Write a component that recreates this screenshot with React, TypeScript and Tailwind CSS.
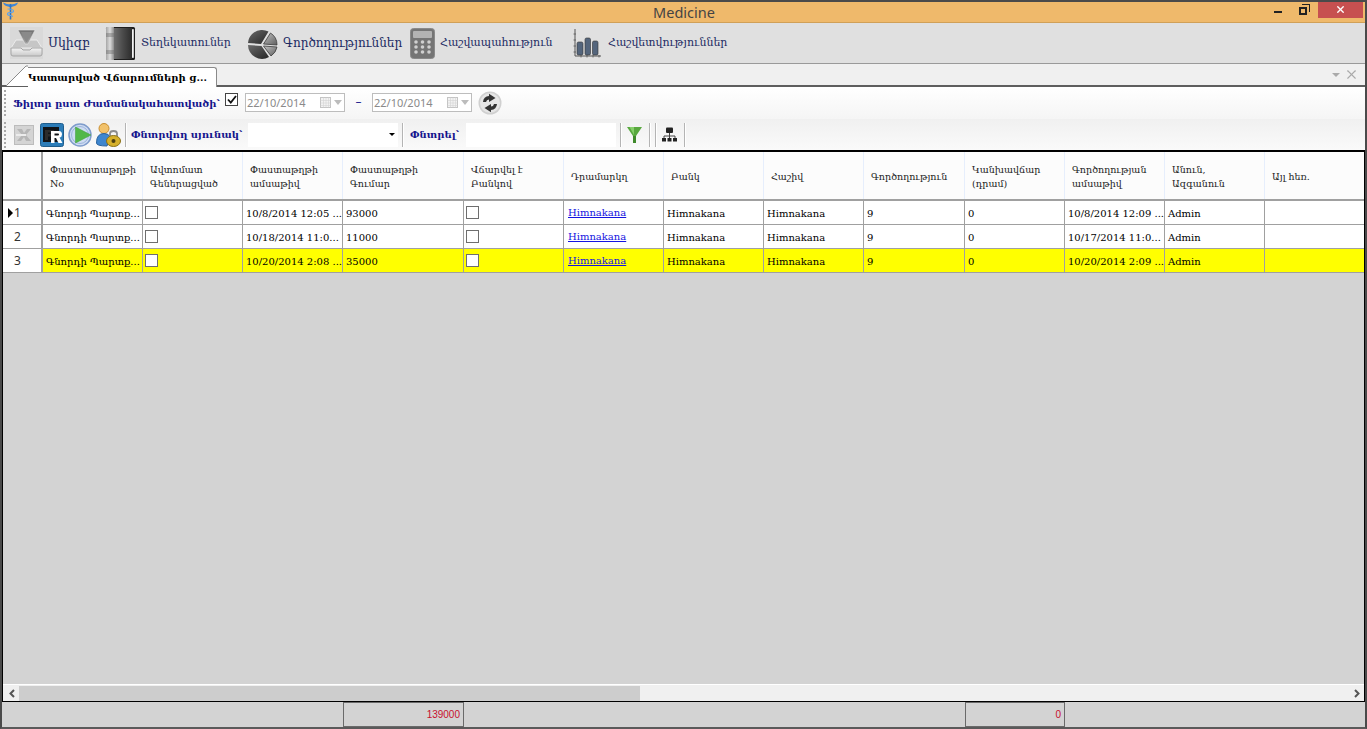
import { X } from 'lucide-react';

// Column widths for the payments grid, in order
const columns = [
  { title: ['Փաստատաթղթի', 'No'], width: 'w-[100px]' },
  { title: ['Ավտոմատ', 'Գեներացված'], width: 'w-[100px]' },
  { title: ['Փաստաթղթի', 'ամսաթիվ'], width: 'w-[100px]' },
  { title: ['Փաստաթղթի', 'Գումար'], width: 'w-[121px]' },
  { title: ['Վճարվել է', 'Բանկով'], width: 'w-[100px]' },
  { title: ['Դրամարկղ'], width: 'w-[100px]' },
  { title: ['Բանկ'], width: 'w-[100px]' },
  { title: ['Հաշիվ'], width: 'w-[100px]' },
  { title: ['Գործողություն'], width: 'w-[101px]' },
  { title: ['Կանխավճար', '(դրամ)'], width: 'w-[100px]' },
  { title: ['Գործողության', 'ամսաթիվ'], width: 'w-[100px]' },
  { title: ['Անուն,', 'Ազգանուն'], width: 'w-[100px]' },
  { title: ['Այլ հեռ.'], width: 'w-[100px]' },
];

const rows = [
  { id: 1, date: '10/8/2014 12:05 ...', sum: '93000', opDate: '10/8/2014 12:09 ...', highlight: false },
  { id: 2, date: '10/18/2014 11:0...', sum: '11000', opDate: '10/17/2014 11:0...', highlight: false },
  { id: 3, date: '10/20/2014 2:08 ...', sum: '35000', opDate: '10/20/2014 2:09 ...', highlight: true },
];

function Grip() {
  return (
    <div className="flex flex-col gap-[2px] ml-[2px] mr-[7px] w-[2px]">
      {[0, 1, 2, 3, 4, 5, 6].map((i) => (
        <span key={i} className="block w-[2px] h-[2px] bg-[#a9a9a9]" />
      ))}
    </div>
  );
}

function Sep({ className = '' }: { className?: string }) {
  return <div className={`w-px h-[24px] bg-[#b4b4b4] border-r border-white box-content ${className}`} />;
}

function Checkbox() {
  return <div className="w-[13px] h-[13px] ml-[-1px] mb-[3px] border border-[#6e6e6e] bg-white shrink-0" />;
}

function HomeIcon() {
  return (
    <svg width="33" height="32" viewBox="0 0 33 32" className="shrink-0">
      <defs>
        <linearGradient id="funnel" x1="0" y1="0" x2="0" y2="1">
          <stop offset="0" stopColor="#6f6f6f" />
          <stop offset="1" stopColor="#a8a8a8" />
        </linearGradient>
        <linearGradient id="tray" x1="0" y1="0" x2="0" y2="1">
          <stop offset="0" stopColor="#f4f4f4" />
          <stop offset="1" stopColor="#c9c9c9" />
        </linearGradient>
      </defs>
      <rect width="33" height="32" fill="#d9d9d9" />
      <path d="M1 21 L6 13 H27 L32 21 Z" fill="#c6c6c6" stroke="#ececec" />
      <path d="M8 3 H25 L18 17 H15 Z" fill="url(#funnel)" stroke="#e6e6e6" strokeWidth="0.6" />
      <path d="M11 5 H22 L17 15 H16 Z" fill="#8a8a8a" />
      <path d="M1 21 H11 L13 23 H20 L22 21 H32 V27 Q32 29 30 29 H3 Q1 29 1 27 Z" fill="url(#tray)" stroke="#a6a6a6" />
    </svg>
  );
}

function BookIcon() {
  return (
    <svg width="31" height="33" viewBox="0 0 31 33" className="shrink-0">
      <defs>
        <linearGradient id="spine" x1="0" y1="0" x2="1" y2="0">
          <stop offset="0" stopColor="#a6a6a6" />
          <stop offset="0.5" stopColor="#dcdcdc" />
          <stop offset="1" stopColor="#8c8c8c" />
        </linearGradient>
        <linearGradient id="cover" x1="0" y1="0" x2="1" y2="0">
          <stop offset="0" stopColor="#6e6e6e" />
          <stop offset="0.5" stopColor="#4a4a4a" />
          <stop offset="1" stopColor="#2c2c2c" />
        </linearGradient>
      </defs>
      <rect x="1" y="0" width="29" height="33" rx="1.5" fill="#1e1e1e" />
      <rect x="1" y="0" width="8" height="33" fill="url(#spine)" />
      <path d="M1 7 H9 M1 9 H9 M1 24 H9 M1 26 H9" stroke="#666" strokeWidth="0.8" />
      <rect x="9" y="1" width="18" height="31" fill="url(#cover)" />
      <rect x="27" y="2" width="1.8" height="29" rx="0.8" fill="#f2f2f2" />
    </svg>
  );
}

function PieIcon() {
  return (
    <svg width="31" height="31" viewBox="0 0 31 31" className="shrink-0">
      <defs>
        <linearGradient id="pieDark" x1="0" y1="0" x2="1" y2="1">
          <stop offset="0" stopColor="#6b6b6b" />
          <stop offset="1" stopColor="#262626" />
        </linearGradient>
        <linearGradient id="pieLight" x1="0" y1="0" x2="1" y2="1">
          <stop offset="0" stopColor="#c4c4c4" />
          <stop offset="1" stopColor="#5e5e5e" />
        </linearGradient>
      </defs>
      <path d="M14 2 A14 14 0 0 0 1 15 L14 16 L21.5 3.5 A14 14 0 0 0 14 2 Z" fill="url(#pieDark)" />
      <path d="M16.5 16 L23.5 5 A14 14 0 0 1 30 17 Z" fill="url(#pieLight)" stroke="#3a3a3a" strokeWidth="0.8" />
      <path d="M16.5 18 L30 19 A14 14 0 0 1 24 28 Z" fill="url(#pieLight)" stroke="#3a3a3a" strokeWidth="0.8" />
      <path d="M1 17 L14.5 18 L22 29 A14 14 0 0 1 1 17 Z" fill="url(#pieDark)" />
    </svg>
  );
}

function CalcIcon() {
  return (
    <svg width="25" height="31" viewBox="0 0 25 31" className="shrink-0">
      <rect x="0.5" y="0.5" width="24" height="30" rx="3" fill="#757575" stroke="#8a8a8a" />
      <rect x="3" y="3" width="19" height="7" rx="1" fill="#b3b3b3" />
      {[13, 18, 23].map((y) =>
        [6, 12.5, 19].map((x) => <circle key={`${x}-${y}`} cx={x} cy={y + 1} r="1.8" fill="#d0d0d0" />),
      )}
    </svg>
  );
}

function ChartIcon() {
  return (
    <svg width="30" height="30" viewBox="0 0 30 30" className="shrink-0">
      <path d="M2 1 V28 H28" fill="none" stroke="#555" strokeWidth="1" />
      <path d="M0.5 6 H3 M0.5 12 H3 M0.5 18 H3 M0.5 24 H3 M8 29.5 V27 M14 29.5 V27 M20 29.5 V27 M26 29.5 V27" stroke="#555" strokeWidth="0.8" />
      <rect x="4" y="14" width="6" height="13" rx="1.5" fill="#54657c" stroke="#333" strokeWidth="0.6" />
      <rect x="12" y="10" width="5.5" height="17" rx="1.5" fill="#54657c" stroke="#333" strokeWidth="0.6" />
      <rect x="19.5" y="13" width="5.5" height="14" rx="1.5" fill="#54657c" stroke="#333" strokeWidth="0.6" />
    </svg>
  );
}

function LogoIcon() {
  return (
    <svg width="15" height="18" viewBox="0 0 15 18">
      <path d="M0 0.5 Q4 2.5 7.5 2.5 Q11 2.5 15 0.5 Q14 4 10 4.5 Q8.5 5 7.5 5 Q6.5 5 5 4.5 Q1 4 0 0.5 Z" fill="#3f86d6" />
      <rect x="6.7" y="2" width="1.6" height="15.5" fill="#2f74c6" />
      <path d="M4.5 7 Q10.5 7 10.5 9 Q10.5 10.5 7.5 10.5 Q4.5 10.5 4.5 12 Q4.5 13.5 7.5 13.5 Q9.5 13.5 9.5 15" fill="none" stroke="#5fa3ea" strokeWidth="1.2" />
    </svg>
  );
}

function ExcelIcon() {
  return (
    <svg width="20" height="20" viewBox="0 0 20 20">
      <rect x="0.5" y="0.5" width="19" height="19" fill="#d4d4d4" stroke="#bcbcbc" />
      <path d="M3 4 H8 L10 8 L13 4 H17 L12 10 L17 16 H12 L10 12 L7 16 H3 L8 10 Z" fill="#b6b6b6" />
      <rect x="2" y="9" width="10" height="2" fill="#ececec" />
    </svg>
  );
}

function ReportIcon() {
  return (
    <svg width="24" height="24" viewBox="0 0 24 24">
      <rect x="0.5" y="0.5" width="23" height="23" rx="2" fill="#2b7cb8" stroke="#1f5d8c" />
      <rect x="3" y="4" width="16" height="15" fill="#101418" />
      <path d="M5 7 H14 V9.5 H8 V11 H13 V13.5 H8 V17 H5 Z" fill="#2c2c2c" />
      <path d="M11 8 H19 Q22 8 22 11.5 Q22 14 19.5 14.5 L22.5 20 H18.5 L16 15 H14.5 V20 H11 Z M14.5 10.5 V12.5 H18 Q19 12.5 19 11.5 Q19 10.5 18 10.5 Z" fill="#fff" fillRule="evenodd" />
    </svg>
  );
}

function PlayIcon() {
  return (
    <svg width="24" height="24" viewBox="0 0 24 24">
      <circle cx="12" cy="12" r="11" fill="#cfdcf2" stroke="#7f9ccb" strokeWidth="1.5" />
      <circle cx="12" cy="12" r="8.5" fill="none" stroke="#9bb4dc" />
      <path d="M7.5 4 L23 12 L7.5 20 Z" fill="#52b848" stroke="#3f9a39" strokeWidth="0.5" />
    </svg>
  );
}

function UserLockIcon() {
  return (
    <svg width="25" height="25" viewBox="0 0 25 25">
      <circle cx="8" cy="6.5" r="5" fill="#f2c26b" stroke="#c98e2f" />
      <path d="M0.5 21 Q0.5 11.5 8 11.5 Q13 11.5 14 15 L11 24 Q0.5 24 0.5 21 Z" fill="#3e86cf" stroke="#2a639e" />
      <path d="M14 14 V11.5 Q14 9 17.5 9 Q21 9 21 11.5 V14" fill="none" stroke="#8c8c8c" strokeWidth="1.8" />
      <ellipse cx="17.5" cy="19" rx="7" ry="5.5" fill="#d6b02a" stroke="#8a7016" />
      <circle cx="17.5" cy="19" r="2" fill="#4d3f10" />
    </svg>
  );
}

function RefreshIcon() {
  return (
    <svg width="24" height="24" viewBox="0 0 24 24">
      <circle cx="12" cy="12" r="11.5" fill="#d0d0d0" />
      <circle cx="12" cy="12" r="10" fill="#e6e6e6" />
      <path d="M5 11 Q5.5 5.5 11 5 L11 2.8 L17.5 7 L11 11 L11 8.5 Q8.5 8.5 8 11 Z" fill="#333" />
      <path d="M19 13 Q18.5 18.5 13 19 L13 21.2 L6.5 17 L13 13 L13 15.5 Q15.5 15.5 16 13 Z" fill="#333" />
    </svg>
  );
}

function FunnelIcon() {
  return (
    <svg width="15" height="18" viewBox="0 0 15 18">
      <path d="M0 1 H15 L9 10 V17 H6 V10 Z" fill="#58a83e" />
      <path d="M2.5 1 H7 L7 9 Z" fill="#86cf6a" />
      <path d="M6 10 H9 V17 H6 Z" fill="#3f8a2b" />
    </svg>
  );
}

function OrgIcon() {
  return (
    <svg width="15" height="15" viewBox="0 0 15 15">
      <rect x="4" y="0.5" width="7" height="5.5" rx="1" fill="#222" />
      <path d="M7.5 6 V9 M2 11 V9 H13 V11 M7.5 9 V11" stroke="#444" strokeWidth="1" fill="none" />
      <rect x="0" y="11" width="4" height="3.5" fill="#222" />
      <rect x="5.5" y="11" width="4" height="3.5" fill="#222" />
      <rect x="11" y="11" width="4" height="3.5" fill="#222" />
    </svg>
  );
}

function DateBox() {
  return (
    <div className="w-[100px] h-[19px] mb-[2px] border border-[#bdbdbd] bg-white flex items-center pl-[1px] pr-[2px] shrink-0">
      <span className="flex-1 text-[11px] text-[#8a8a8a] font-['Noto_Sans',sans-serif] leading-none">22/10/2014</span>
      <svg width="11" height="11" viewBox="0 0 11 11" className="mr-[1px]">
        <rect x="0.5" y="0.5" width="10" height="10" fill="#f2f2f2" stroke="#c4c4c4" />
        <path d="M0.5 3.5 H10.5 M0.5 6 H10.5 M0.5 8.5 H10.5 M3.5 0.5 V10.5 M6 0.5 V10.5 M8.5 0.5 V10.5" stroke="#d4d4d4" strokeWidth="0.6" />
      </svg>
      <span className="ml-[2px] w-0 h-0 border-x-[4px] border-x-transparent border-t-[5px] border-t-[#bcbcbc]" />
    </div>
  );
}

function ToolbarLink({ icon, label, width, size = 'text-[11px]' }: { icon: React.ReactNode; label: string; width: string; size?: string }) {
  return (
    <div className={`flex items-center gap-[5px] shrink-0 ${width}`}>
      {icon}
      <span className={`${size} text-[#1b2a63] whitespace-nowrap`}>{label}</span>
    </div>
  );
}

function Cell({ width, children, className = '' }: { width: string; children?: React.ReactNode; className?: string }) {
  return (
    <div className={`${width} shrink-0 h-full border-r border-[#a0a0a0] flex items-center px-[3px] pt-[2px] text-[10px] text-black whitespace-nowrap overflow-hidden ${className}`}>
      {children}
    </div>
  );
}

export default function App() {
  return (
    <div className="w-[1367px] h-[729px] overflow-hidden flex flex-col bg-[#d3d3d3] border-t-2 border-b-2 border-x-2 border-t-[#4a4a4a] border-b-[#5a5a5a] border-x-[#4a4a4a] font-['DejaVu_Serif',serif]">
      {/* Title bar */}
      <div className="h-[21px] shrink-0 bg-[#efb96b] border-b border-[#d0a058] flex items-start">
        <div className="flex-1 pl-[1px]">
          <LogoIcon />
        </div>
        <div className="text-center text-[14.5px] leading-[20px] text-[#444] font-['Noto_Sans',sans-serif]">Medicine</div>
        <div className="flex-1 flex items-start justify-end">
          <div className="w-[8px] h-[2px] bg-[#222] mt-[9px] mr-[17px]" />
          <div className="mt-[2px] mr-[8px] w-[11px] h-[11px] relative">
            <div className="absolute top-0 right-0 w-[8px] h-[8px] border-t border-r border-[#222]" />
            <div className="absolute bottom-0 left-0 w-[8px] h-[8px] border-2 border-[#222] bg-[#efb96b]" />
          </div>
          <div className="w-[45px] h-[17px] bg-[#c75050] flex items-center justify-center mt-[-1px] mr-[2px]">
            <X size={11} strokeWidth={3} className="text-white" />
          </div>
        </div>
      </div>

      {/* Main menu */}
      <div className="h-[41px] shrink-0 bg-[#e0e0e0] border-b border-[#9a9a9a] flex items-center pl-[8px]">
        <ToolbarLink icon={<HomeIcon />} label="Սկիզբ" width="w-[95px]" size="text-[12.5px]" />
        <ToolbarLink icon={<BookIcon />} label="Տեղեկատուներ" width="w-[142px]" />
        <ToolbarLink icon={<PieIcon />} label="Գործողություններ" width="w-[163px]" size="text-[12px]" />
        <ToolbarLink icon={<CalcIcon />} label="Հաշվապահություն" width="w-[163px]" />
        <ToolbarLink icon={<ChartIcon />} label="Հաշվետվություններ" width="w-[160px]" />
      </div>

      {/* Tab strip */}
      <div className="h-[23px] shrink-0 bg-[#f0f0f0] border-b-2 border-[#5e5e5e] flex items-end relative">
        <svg width="22" height="21" viewBox="0 0 22 21" className="shrink-0 ml-[4px] mb-[-1px]">
          <path d="M0 21 L20 1 H22 V21 Z" fill="#fff" />
          <path d="M0 21 L20 1 H22" fill="none" stroke="#8a8a8a" />
        </svg>
        <div className="h-[20px] w-[189px] bg-white border-t border-r border-[#8a8a8a] rounded-tr-[3px] mb-[-2px] text-[10px] font-bold text-black flex items-center whitespace-nowrap">
          Կատարված Վճարումների ց...
        </div>
        <div className="flex-1" />
        <div className="flex items-center self-center mr-[6px] gap-[4px]">
          <span className="w-0 h-0 border-x-[4px] border-x-transparent border-t-[4px] border-t-[#aaa]" />
          <X size={15} strokeWidth={1.8} className="text-[#aaa]" />
        </div>
      </div>

      {/* Date filter bar */}
      <div className="h-[32px] shrink-0 bg-gradient-to-b from-white to-[#f5f5f5] flex items-center">
        <Grip />
        <span className="w-[210px] shrink-0 text-[10px] font-bold text-[#14148c] whitespace-nowrap">Ֆիլտր ըստ Ժամանակահատվածի՝</span>
        <div className="w-[13px] h-[13px] border border-[#444] bg-white flex items-center justify-center shrink-0 mb-[8px] ml-[2px] mr-[7px]">
          <svg width="10" height="9" viewBox="0 0 10 9">
            <path d="M1 4.5 L3.8 7.5 L9 1" fill="none" stroke="#111" strokeWidth="1.8" />
          </svg>
        </div>
        <DateBox />
        <span className="w-[27px] text-center text-[12px] text-[#14148c] shrink-0 mb-[2px]">–</span>
        <DateBox />
        <div className="ml-[6px]">
          <RefreshIcon />
        </div>
      </div>

      {/* Search bar */}
      <div className="h-[31px] shrink-0 bg-gradient-to-b from-[#f0f0f0] to-[#fafafa] flex items-center">
        <Grip />
        <div className="flex items-center gap-[4px] shrink-0 w-[109px] pl-[1px]">
          <ExcelIcon />
          <div className="ml-[2px]"><ReportIcon /></div>
          <PlayIcon />
          <UserLockIcon />
        </div>
        <Sep className="ml-[3px]" />
        <span className="w-[117px] ml-[4px] shrink-0 text-[10px] font-bold text-[#14148c] whitespace-nowrap">Փնտրվող սյունակ՝</span>
        <div className="w-[150px] h-[24px] bg-white flex items-center justify-end pr-[3px] shrink-0">
          <span className="w-0 h-0 border-x-[3px] border-x-transparent border-t-[3px] border-t-black" />
        </div>
        <Sep className="ml-[4px]" />
        <span className="w-[56px] ml-[6px] shrink-0 text-[10px] font-bold text-[#14148c] whitespace-nowrap">Փնտրել՝</span>
        <div className="w-[150px] h-[24px] bg-white shrink-0" />
        <Sep className="ml-[4px]" />
        <div className="ml-[5px] mr-[7px]"><FunnelIcon /></div>
        <Sep />
        <Sep className="ml-[4px]" />
        <div className="ml-[5px] mr-[7px]"><OrgIcon /></div>
        <Sep />
      </div>

      {/* Grid */}
      <div className="flex-1 min-h-0 border-t-2 border-b border-r border-l border-black bg-[#d3d3d3] flex flex-col">
        <div className="flex-1 min-h-0 overflow-hidden">
          <div className="h-[49px] flex bg-[#fcfcfc] border-b-2 border-[#a0a0a0]">
            <div className="w-[40px] shrink-0 h-full border-r-2 border-[#a0a0a0]" />
            {columns.map((col) => (
              <div
                key={col.title[0]}
                className={`${col.width} shrink-0 h-full border-r border-[#e6eefc] flex flex-col justify-center pl-[7px] pt-[3px] text-[9.5px] leading-[14px] text-[#222] whitespace-nowrap overflow-hidden`}
              >
                {col.title.map((line) => (
                  <span key={line}>{line}</span>
                ))}
              </div>
            ))}
          </div>
          {rows.map((row) => {
            const bg = row.highlight ? 'bg-[#ffff00]' : 'bg-white';
            return (
              <div key={row.id} className="h-[24px] flex border-b border-[#a0a0a0]">
                <div className="w-[40px] shrink-0 h-full bg-white border-r-2 border-[#a0a0a0] flex items-center text-[12px] text-[#333] font-['Noto_Sans',sans-serif]">
                  {row.id === 1 ? (
                    <span className="ml-[5px] mr-[1px] w-0 h-0 border-y-[5px] border-y-transparent border-l-[5px] border-l-black" />
                  ) : (
                    <span className="w-[11px]" />
                  )}
                  <span>{row.id}</span>
                </div>
                <Cell width="w-[100px]" className={bg}>Գնորդի Պարտք...</Cell>
                <Cell width="w-[100px]" className={bg}><Checkbox /></Cell>
                <Cell width="w-[100px]" className={bg}>{row.date}</Cell>
                <Cell width="w-[121px]" className={bg}>{row.sum}</Cell>
                <Cell width="w-[100px]" className={bg}><Checkbox /></Cell>
                <Cell width="w-[100px]" className={bg}><span className="underline text-[#1414e0] mb-[2px] px-[1px]">Himnakana</span></Cell>
                <Cell width="w-[100px]" className={bg}>Himnakana</Cell>
                <Cell width="w-[100px]" className={bg}>Himnakana</Cell>
                <Cell width="w-[101px]" className={bg}>9</Cell>
                <Cell width="w-[100px]" className={bg}>0</Cell>
                <Cell width="w-[100px]" className={bg}>{row.opDate}</Cell>
                <Cell width="w-[100px]" className={bg}>Admin</Cell>
                <Cell width="w-[100px]" className={bg} />
              </div>
            );
          })}
        </div>

        {/* Horizontal scrollbar */}
        <div className="h-[17px] shrink-0 bg-[#f0f0f0] border-t border-white flex items-center">
          <span className="w-[16px] text-center shrink-0">
            <svg width="6" height="9" viewBox="0 0 6 9" className="inline-block ml-[1px]">
              <path d="M5 1 L1.5 4.5 L5 8" fill="none" stroke="#555" strokeWidth="2" />
            </svg>
          </span>
          <div className="w-[621px] h-[15px] bg-[#cdcdcd] shrink-0" />
          <div className="flex-1" />
          <span className="w-[15px] text-center shrink-0">
            <svg width="6" height="9" viewBox="0 0 6 9" className="inline-block">
              <path d="M1 1 L4.5 4.5 L1 8" fill="none" stroke="#555" strokeWidth="2" />
            </svg>
          </span>
        </div>
      </div>

      {/* Totals */}
      <div className="h-[25px] shrink-0 bg-[#d3d3d3] flex items-stretch font-['Liberation_Sans',sans-serif] text-[10px] text-[#c8102e]">
        <div className="w-[341px] shrink-0" />
        <div className="w-[121px] shrink-0 border border-[#6a6a6a] flex items-center justify-end pr-[3px]">139000</div>
        <div className="w-[501px] shrink-0" />
        <div className="w-[100px] shrink-0 border border-[#6a6a6a] flex items-center justify-end pr-[3px]">0</div>
      </div>
    </div>
  );
}
